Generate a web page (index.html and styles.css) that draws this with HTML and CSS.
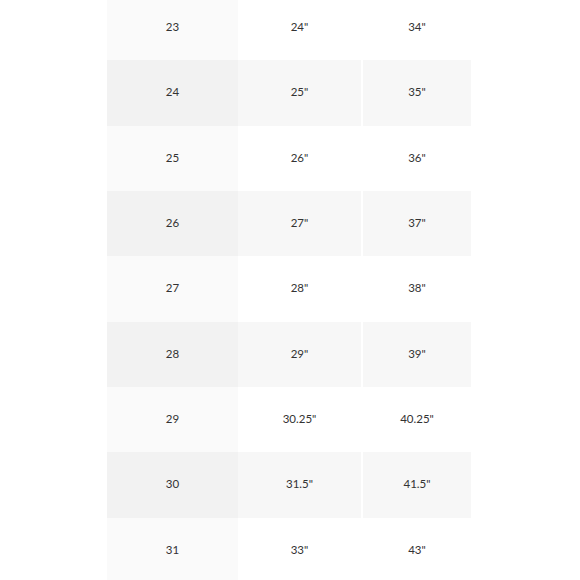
FILE: index.html
```html
<!DOCTYPE html>
<html>
<head>
<meta charset="utf-8">
<link rel="stylesheet" href="styles.css">
</head>
<body>
<div class="chart">
  <div class="row"><div class="cell c1">23</div><div class="cell c2">24"</div><div class="cell c3">34"</div></div>
  <div class="row alt"><div class="cell c1">24</div><div class="cell c2">25"</div><div class="cell c3">35"</div></div>
  <div class="row"><div class="cell c1">25</div><div class="cell c2">26"</div><div class="cell c3">36"</div></div>
  <div class="row alt"><div class="cell c1">26</div><div class="cell c2">27"</div><div class="cell c3">37"</div></div>
  <div class="row"><div class="cell c1">27</div><div class="cell c2">28"</div><div class="cell c3">38"</div></div>
  <div class="row alt"><div class="cell c1">28</div><div class="cell c2">29"</div><div class="cell c3">39"</div></div>
  <div class="row"><div class="cell c1">29</div><div class="cell c2">30.25"</div><div class="cell c3">40.25"</div></div>
  <div class="row alt"><div class="cell c1">30</div><div class="cell c2">31.5"</div><div class="cell c3">41.5"</div></div>
  <div class="row"><div class="cell c1">31</div><div class="cell c2">33"</div><div class="cell c3">43"</div></div>
</div>
</body>
</html>
```
FILE: styles.css
```css
html, body {
  margin: 0;
  padding: 0;
  background: #ffffff;
  overflow: hidden;
}
.chart {
  margin-top: -5px;
  margin-left: 107px;
  width: 366px;
  display: flex;
  flex-direction: column;
  font-family: "Lato", "Open Sans", sans-serif;
  font-size: 11.5px;
  color: #333333;
}
.row {
  display: grid;
  grid-template-columns: 131px 123px 110px;
  height: 65.33px;
}
.cell {
  display: flex;
  align-items: center;
  justify-content: center;
  padding-bottom: 2px;
}
.c1 {
  background: #fafafa;
}
.c3 {
  margin-left: 2px;
}
.alt .c1 {
  background: #f2f2f2;
}
.alt .c2,
.alt .c3 {
  background: #f7f7f7;
}
```
